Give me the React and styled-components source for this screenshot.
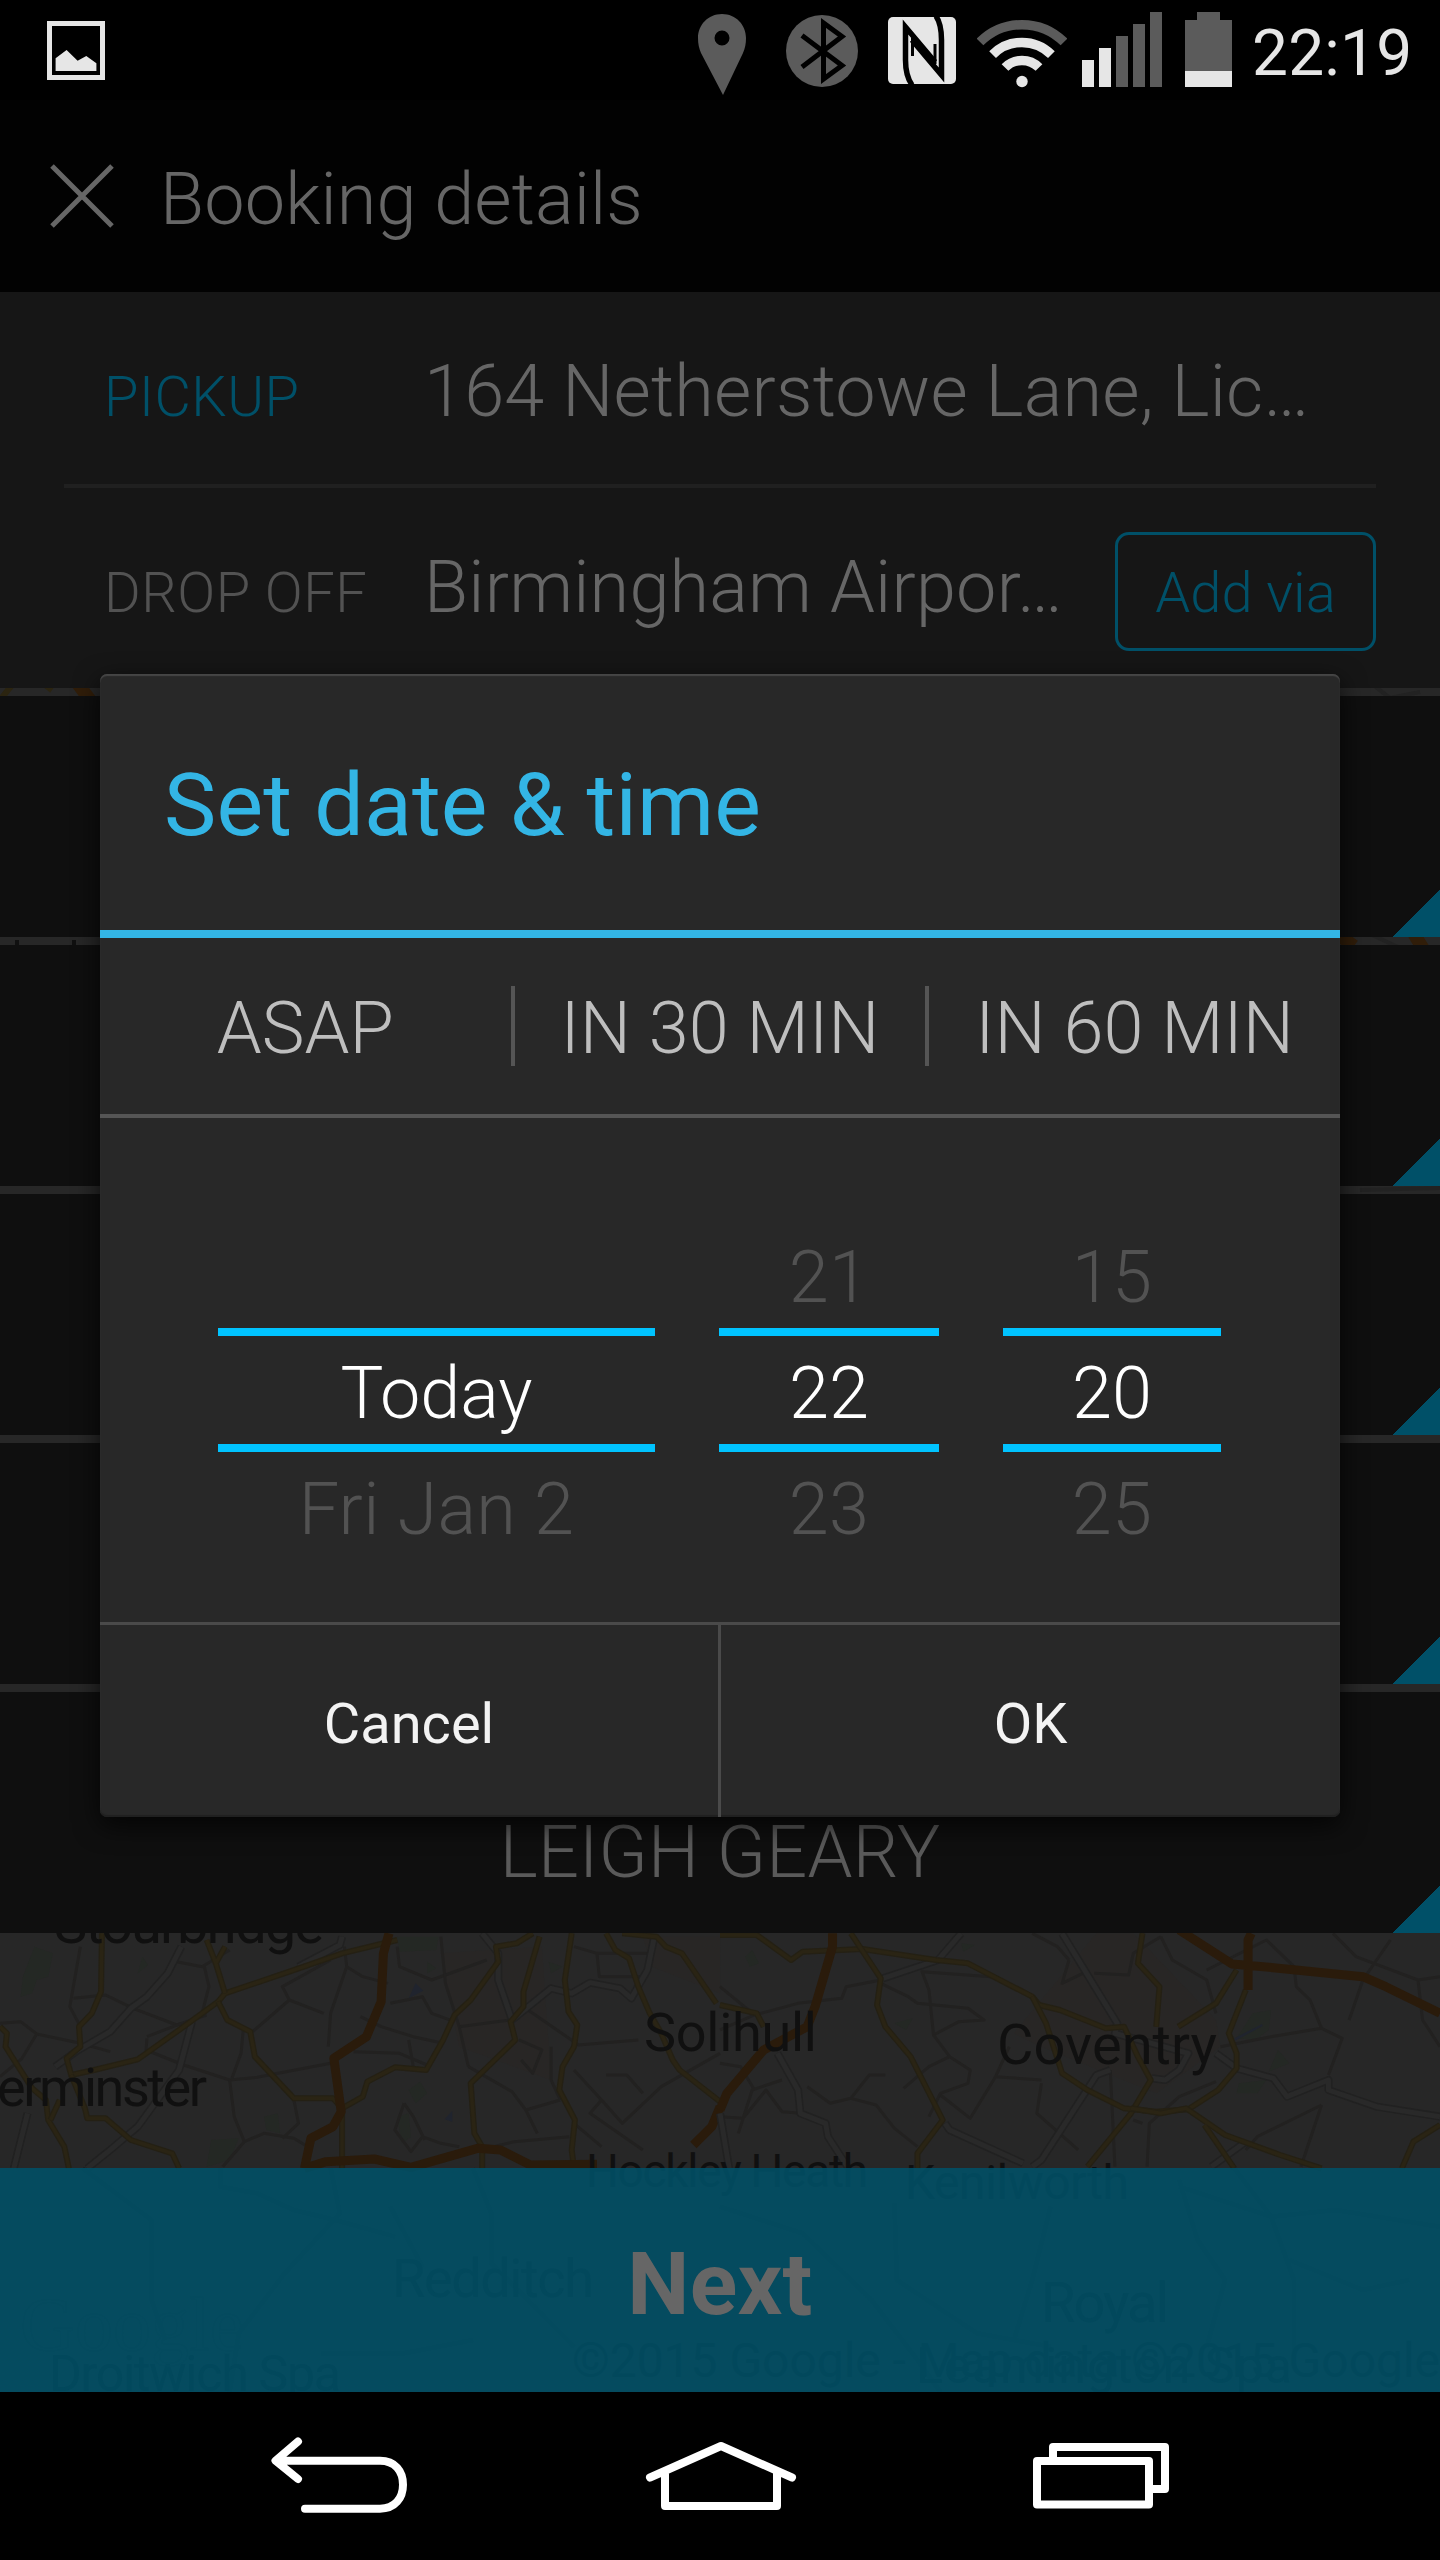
import React, { useState } from "react";
import styled, { createGlobalStyle } from "styled-components";

const bookingRows = ["", "", "", "", "LEIGH GEARY"];
const quickTimes = ["ASAP", "IN 30 MIN", "IN 60 MIN"];
const wheels = [
  { id: "day", width: 437, values: ["", "Today", "Fri Jan 2"] },
  { id: "hour", width: 220, values: ["21", "22", "23"] },
  { id: "minute", width: 218, values: ["15", "20", "25"] },
];

const StatusIcons = () => (
  <IconGroup>
    <Icon $w={48} $h={100} $gap={40} viewBox="698 0 48 100">
      <path
        fill="#5b5b5b"
        fillRule="evenodd"
        d="M722 14C708 14 698 25 698 38C698 44 699 48 701 53L723 95L743 53C745 48 746 44 746 38C746 25 736 14 722 14ZM722 30.500A7.500 7.500 0 1 1 722 45.500A7.500 7.500 0 1 1 722 30.500Z"
      />
    </Icon>
    <Icon $w={72} $h={100} $gap={29} viewBox="786 0 72 100">
      <circle cx="822" cy="51" r="36" fill="#5b5b5b" />
      <path
        d="M802 35.500L842 65.500L823.500 79V23L842 36.500L802 67"
        fill="none"
        stroke="#000"
        strokeWidth="5"
      />
    </Icon>
    <Icon $w={70} $h={100} $gap={20} viewBox="887 0 70 100">
      <rect x="888" y="17" width="68" height="67" rx="5" fill="#e6e6e6" />
      <g fill="none" stroke="#000" strokeWidth="5.500" strokeLinejoin="miter">
        <path d="M912 85C907 78 906 70 906 62V27L934.500 64V38" stroke="none" />
        <path d="M912 85C907 78 905.500 70 905.500 60V27L935 62" />
        <path d="M936 16C940 22 941.500 30 941.500 40V75L912 40" />
        <path d="M912.500 38V56M935 44V64" strokeWidth="3" />
      </g>
    </Icon>
    <Icon $w={90} $h={100} $gap={15} viewBox="977 0 90 100">
      <g fill="none" strokeWidth="9.500">
        <path d="M980 42A59.500 59.500 0 0 1 1064 42" stroke="#5b5b5b" />
        <path d="M992.600 54.600A41.500 41.500 0 0 1 1051.400 54.600" stroke="#e6e6e6" />
        <path d="M1005 67.500A24 24 0 0 1 1039 67.500" stroke="#e6e6e6" />
      </g>
      <circle cx="1022" cy="81.500" r="5.700" fill="#e6e6e6" />
    </Icon>
    <Icon $w={80} $h={100} $gap={23} viewBox="1082 0 80 100">
      {[60, 48, 36, 24, 12].map((top, i) => (
        <rect
          key={top}
          x={1082 + i * 17}
          y={top}
          width="12"
          height={87 - top}
          fill={i < 2 ? "#e6e6e6" : "#5b5b5b"}
        />
      ))}
    </Icon>
    <Icon $w={47} $h={100} $gap={20} viewBox="1185 0 47 100">
      <path d="M1185 20H1197V12H1220V20H1232V71H1185Z" fill="#5b5b5b" />
      <rect x="1185" y="71" width="47" height="16" fill="#e6e6e6" />
    </Icon>
  </IconGroup>
);

const minorRoads = [
  "M0 730L45 725L80 762L175 790L240 815M80 762L48 835L0 890M160 655L230 645L290 685L385 735L450 705M175 500L152 680L175 740",
  "M385 545L440 560L500 510M445 560L455 620L440 700L415 725M320 770L395 730M320 775L318 810L400 855L500 900L560 892L720 850",
  "M500 900L510 1010L532 1085L575 1060L640 1075L670 1100M532 1085L485 1160M640 960L650 1030L615 1075M530 745L525 820L505 895",
  "M750 500L755 560L720 700L715 800M755 560L790 590L845 610M550 755L630 660L705 700M630 660L615 620L720 540M865 500L870 560L940 600L1060 540",
  "M850 670L920 650L940 700L990 725M785 710L830 740L900 770L965 790M770 815L870 820L930 855M890 780L900 860M960 470L970 610L1000 740L1020 860",
  "M1000 740L1110 720M1130 780L1180 810L1160 880L1135 840M1150 690L1260 795L1390 780M1250 500L1300 520L1305 590L1400 590M1300 520L1420 520",
  "M1020 860L1115 935L1145 990L1170 1060M1145 990L1220 960M1200 800L1200 900L1220 960M1250 870L1310 960L1285 1000L1400 1110M1310 960L1355 1030L1440 920L1568 820",
  "M880 970L860 1050L895 1115L920 1070L960 1090L1000 1100M880 970L900 1010L925 1080M1320 885L1365 885L1400 940M1250 1030L1310 1100M1045 1110L1120 1085L1240 1070",
];

const minorRoadsEast = [
  "M0 620L75 705L170 670L265 655L275 620L350 600M75 705L0 750M350 610L410 650L430 670L540 685L575 720L520 725L465 765L455 630L440 575L590 590",
  "M465 765L500 830L455 860L400 925M500 830L545 870L540 910L480 940L455 1010M360 885L325 885L285 955L340 975L380 1045L430 1100M285 955L240 970L190 920",
  "M480 945L545 1015L600 890L700 900M600 890L630 800M760 540L745 610L790 580M680 460L735 500L760 540M815 580L890 585L900 520L960 470",
  "M960 470L985 540L1060 600L1080 700M850 870L860 1160M1090 800L1200 770L1310 745L1355 775L1325 885M1310 745L1285 660L1255 620L1250 560L1190 480L1060 570",
  "M1335 460L1385 530L1520 600L1568 590M1460 480L1400 600L1370 720M1520 600L1530 720L1568 800M920 1030L900 1020M930 1160L935 1030L1000 950L1080 905",
  "M1310 975L1170 1070L1145 1110M1310 975L1265 1160M0 1010L50 1015L100 930L135 995L175 1000M135 900L70 930L40 1060M700 910L690 1000L780 1110M0 850L45 860L75 930",
];

const yellowRoads = [
  "M222 460L220 635L200 700L172 740L175 800L145 835L155 885L205 870L300 838L385 755L475 665L490 640L630 575L745 520L865 480",
  "M450 480L470 550L490 500M470 550L490 640M475 665L495 720L545 755L555 830L640 955L725 955L745 985M0 740L15 760L12 800L70 925L100 960L105 1020L140 1100L150 1165",
  "M155 885L185 985L190 1015L230 1015L285 1080L375 1120L390 1165M130 960L110 1020M745 985L745 1165M745 985L790 950L800 905L860 862L928 870L965 780L990 705L1025 660L1085 545L1080 500L1125 490L1160 460",
  "M1175 470L1140 635L1140 680L1112 725L1122 780L1025 910L1033 1060L1050 1100V1165M1245 460L1230 600L1238 695L1257 735L1250 800L1225 860L1218 930L1252 1020L1245 1110L1250 1165",
  "M1320 460L1340 510L1370 535L1390 620L1415 700L1440 760L1465 840L1480 870L1568 965M1355 460L1430 470L1450 500L1485 520L1560 670",
];

const yellowRoadsEast = [
  "M0 465L80 465L155 540L180 515L310 507L470 540L540 550L680 650L695 675L740 690L840 745L880 740L910 830L938 900L895 1000L800 1160",
  "M285 460L350 595L342 675L360 740L415 830L485 1020L430 1120V1165M680 650L710 730L745 880L800 930L880 985L950 995L1020 988L1085 930L1125 865V820L1108 760L1145 630",
  "M920 460L910 550L957 620L950 740M1125 570L1080 670L998 740M895 985L960 1000L1015 985L1100 1065L1220 1125L1310 1165M1055 1035L1120 1165M1568 1035L1510 1085L1485 1165M0 675L80 700L95 740",
];

const whiteRoads = [
  "M395 500L365 580L320 650L285 685L240 755L165 815L120 860M418 725L390 870L300 1040L240 1110L190 1165M745 470L740 495L650 560M60 1000L30 1165M1050 460L1085 520V600L1115 720L1200 625L1245 640L1285 608L1350 625L1375 655L1410 570L1425 470",
];

const whiteRoadsEast = [
  "M525 460L475 540L355 595M745 460L865 730L860 760L1020 820L1000 870L970 900L940 895M850 870L820 885L700 1140L680 1160M1080 820L1125 865L1205 895L1235 950L1325 900L1325 930L1430 980L1568 1010M125 820L170 930L175 1000L230 1030L235 1070L280 1165M490 1030L500 1050L660 1150M1145 1085L1070 1160M0 1000L20 1165",
];

// The map is laid out on two 1568x1200 tiles that sit side by side.
const tiles = [
  {
    minor: minorRoads,
    white: whiteRoads,
    yellow: yellowRoads,
    motorway:
      "M847 460L835 520L830 665L798 770L727 835L743 995L725 1040L677 1075L663 1165M663 1165L710 1145L815 1137L895 1162L1040 1105L1090 1110L1155 1155L1300 1153M1568 980L1550 1040L1510 1095",
    south:
      "M180 1165L330 1320V1560L360 1680M480 1165V1220L560 1240L640 1290L730 1320L860 1370M720 1165L740 1300L620 1480L520 1660L500 1836M850 1280L920 1460M1030 1165L1070 1300V1450L1250 1700M700 1720L880 1720L1030 1680",
    woods:
      "M75 500L115 520L105 590L80 600L70 640L45 650L50 590ZM865 470L955 470L950 510L870 515ZM930 545L950 565L930 580ZM1195 545L1225 560L1200 580ZM460 1080L520 1075L500 1140L450 1160ZM575 1010L605 1000L610 1060L580 1050ZM865 1010L890 1000L895 1070L875 1090ZM890 930L915 905L930 940L905 970ZM310 530L322 555L300 580Z",
    water: "M890 655L905 610L922 632ZM968 1018L985 992L985 1025Z",
    town: "M960 520L1180 500L1200 900L1000 800ZM1400 470L1568 470V640L1420 560Z",
  },
  {
    minor: minorRoadsEast,
    white: whiteRoadsEast,
    yellow: yellowRoadsEast,
    motorway:
      "M245 460V500L207 680L190 740L95 810L15 940L0 990M1000 450L1115 552L1205 563L1400 590L1450 620L1568 700M1157 460L1150 480V630",
    south:
      "M0 1280L180 1360L330 1560L430 1740L480 1836M380 1270L385 1500L560 1660L720 1700M720 1280L680 1500L640 1680M1000 1200L1040 1380L1100 1500L1060 1700M1120 1165L1200 1310L1250 1500V1740M1000 1220L1200 1310L1340 1290L1568 1340M1240 1440L1400 1530L1500 1500",
    woods:
      "M1160 700L1200 690L1195 750L1165 780L1125 775ZM1215 810L1240 850L1195 875ZM1130 910L1190 900L1170 940L1125 940ZM55 530L70 510L85 550L65 560ZM380 730L420 715L405 750ZM525 490L555 495L530 515Z",
    water: "M1120 775L1180 732L1182 738L1122 782Z",
    town: "M820 460L900 460L1080 720L1090 800L950 940L700 800L640 760Z",
  },
];

const MapView = () => (
  <MapSvg viewBox="0 688 1440 1704" preserveAspectRatio="none">
    <rect x="0" y="688" width="1440" height="1704" fill="#272727" />
    <g fill="none" strokeWidth="13">
      <path d="M78 684L90 700M1340 936L1354 946M1414 934L1424 950" stroke="#301d09" />
      <path d="M12 685L0 700M44 684L52 690" stroke="#2b2410" strokeWidth="6" />
      <path
        d="M1372 684L1390 698L1420 692M1360 1190L1440 1188M1370 934L1400 948"
        stroke="#222"
        strokeWidth="4"
      />
      <path d="M17 940V946M74 940V946" stroke="#101010" strokeWidth="4" />
    </g>
    {tiles.map((tile, i) => (
      <g
        key={i}
        transform={`translate(${i * 720} 1780) scale(0.4592 0.33333)`}
        fill="none"
        strokeLinejoin="round"
      >
        <path d={tile.town} fill="#292724" opacity="0.6" />
        <path d={tile.woods} fill="#242824" />
        <path d={tile.water} fill="#20242e" />
        {tile.minor.map((d) => (
          <Road key={d} d={d} stroke="#222120" strokeWidth="3" />
        ))}
        {tile.white.map((d) => (
          <React.Fragment key={d}>
            <Road d={d} stroke="#212121" strokeWidth="8" />
            <Road d={d} stroke="#292929" strokeWidth="5" />
          </React.Fragment>
        ))}
        {tile.yellow.map((d) => (
          <React.Fragment key={d}>
            <Road d={d} stroke="#242014" strokeWidth="6" />
            <Road d={d} stroke="#2a2414" strokeWidth="3.500" />
          </React.Fragment>
        ))}
        <Road d={tile.motorway} stroke="#2a1b0b" strokeWidth="9" />
        <Road d={tile.south} stroke="#202020" strokeWidth="4" />
      </g>
    ))}
    <g fill="#101010" fontFamily="Roboto" fontWeight="400" fontSize="56">
      <text x="54" y="1943" textLength="270">Stourbridge</text>
      <text x="-3" y="2106" fontSize="54" textLength="210">erminster</text>
      <text x="644" y="2051" fontSize="54" textLength="173">Solihull</text>
      <text x="997" y="2064" textLength="220">Coventry</text>
      <text x="586" y="2187" fontSize="46" textLength="282">Hockley Heath</text>
      <text x="905" y="2199" fontSize="48" textLength="224">Kenilworth</text>
      <text x="392" y="2297" fontSize="54" textLength="202">Redditch</text>
      <text x="1041" y="2322" textLength="128">Royal</text>
      <text x="49" y="2391" fontSize="50" textLength="292">Droitwich Spa</text>
      <text x="916" y="2383" fontSize="50" textLength="376">Leamington Spa</text>
      <text x="572" y="2377" fontSize="48" textLength="868">
        ©2015 Google - Map data ©2015 Google
      </text>
      <text x="20" y="2350" fontFamily="Liberation Serif" fontSize="76" fill="none" stroke="#222">
        Google
      </text>
    </g>
  </MapSvg>
);

const App = () => {
  const [open, setOpen] = useState(true);

  return (
    <Screen>
      <GlobalStyle />
      <StatusBar>
        <Icon $w={58} $h={100} viewBox="47 0 58 100">
          <rect x="49.500" y="23.500" width="53" height="54" fill="none" stroke="#e6e6e6" strokeWidth="5" />
          <path
            d="M55.600 58.300L66.600 50L77.600 60.700L86.300 56L96.400 63.300V71H55.600Z"
            fill="#e6e6e6"
          />
        </Icon>
        <StatusIcons />
        <Clock>22:19</Clock>
      </StatusBar>

      <Body>
        <Page>
          <TitleBar>
            <Icon $w={66} $h={66} viewBox="0 0 66 66">
              <path d="M3 3L63 63M63 3L3 63" stroke="#666" strokeWidth="5" />
            </Icon>
            <PageTitle>Booking details</PageTitle>
          </TitleBar>
          <Route>
            <Stop>
              <StopLabel $active>PICKUP</StopLabel>
              <Address>164 Netherstowe Lane, Lic…</Address>
            </Stop>
            <Divider />
            <Stop>
              <StopLabel>DROP OFF</StopLabel>
              <Address>Birmingham Airpor…</Address>
              <ViaButton>Add via</ViaButton>
            </Stop>
          </Route>
          <Main>
            <MapView />
            <Content>
              <Rows>
                {bookingRows.map((text, i) => (
                  <BookingRow key={i}>{text}</BookingRow>
                ))}
              </Rows>
              <NextButton onClick={() => setOpen(true)}>Next</NextButton>
            </Content>
          </Main>
        </Page>

        {open && (
          <Overlay>
            <Dialog>
              <DialogTitle>Set date &amp; time</DialogTitle>
              <QuickTimes>
                {quickTimes.map((label) => (
                  <QuickTime key={label}>{label}</QuickTime>
                ))}
              </QuickTimes>
              <Picker>
                {wheels.map(({ id, width, values }) => (
                  <Wheel key={id} $width={width}>
                    <WheelValue $height={101}>{values[0]}</WheelValue>
                    <SelectedValue>{values[1]}</SelectedValue>
                    <WheelValue $height={115}>{values[2]}</WheelValue>
                  </Wheel>
                ))}
              </Picker>
              <Actions>
                <Action onClick={() => setOpen(false)}>Cancel</Action>
                <Action onClick={() => setOpen(false)}>OK</Action>
              </Actions>
            </Dialog>
          </Overlay>
        )}
      </Body>

      <NavBar>
        <NavIcon $w={144} $h={80} viewBox="268 2436 144 80">
          <path d="M298 2441.500L275.500 2460.700L298 2479M278 2460.700H380C395 2460.700 403 2471 403 2484.700C403 2498 395 2508.700 380 2508.700H305" />
        </NavIcon>
        <NavIcon $w={160} $h={80} viewBox="640 2436 160 80">
          <path d="M649 2477.500L720 2446L791 2477.500M664 2474V2506H776V2474" />
        </NavIcon>
        <NavIcon $w={144} $h={80} viewBox="1029 2436 144 80">
          <path d="M1037 2461H1149V2504.500H1037ZM1053 2458V2447H1165V2489H1152" />
        </NavIcon>
      </NavBar>
    </Screen>
  );
};

export default App;

const GlobalStyle = createGlobalStyle`
  body {
    margin: 0;
    background: #000;
  }
  * {
    box-sizing: border-box;
  }
  button {
    font: inherit;
    letter-spacing: inherit;
    color: inherit;
    background: none;
    border: 0;
    padding: 0;
  }
`;

const Screen = styled.div`
  width: 1440px;
  height: 2560px;
  display: flex;
  flex-direction: column;
  background: #000;
  font-family: Roboto, sans-serif;
  font-weight: 300;
  font-size: 72px;
  white-space: nowrap;
  overflow: hidden;
`;

const Icon = styled.svg`
  flex: none;
  display: block;
  width: ${(props) => props.$w}px;
  height: ${(props) => props.$h}px;
  margin-right: ${(props) => props.$gap || 0}px;
`;

const NavIcon = styled(Icon)`
  fill: none;
  stroke: #fff;
  stroke-width: 8;
  stroke-linecap: round;
  stroke-linejoin: round;
`;

const Road = styled.path`
  vector-effect: non-scaling-stroke;
`;

const StatusBar = styled.div`
  height: 100px;
  display: flex;
  align-items: center;
  padding: 0 28px 0 47px;
`;

const IconGroup = styled.div`
  display: flex;
  margin-left: auto;
`;

const Clock = styled.div`
  width: 160px;
  padding-top: 7px;
  font-size: 64px;
  font-weight: 400;
  line-height: 80px;
  letter-spacing: 0.2px;
  color: #e6e6e6;
`;

const Body = styled.div`
  height: 2292px;
  display: grid;

  > * {
    grid-area: 1 / 1;
  }
`;

const Page = styled.div`
  display: flex;
  flex-direction: column;
`;

const TitleBar = styled.div`
  height: 192px;
  display: flex;
  align-items: center;
  gap: 45px;
  padding-left: 49px;
  background: #020202;
`;

const PageTitle = styled.div`
  padding-top: 6px;
  letter-spacing: 0.1px;
  color: #666;
`;

const Route = styled.div`
  height: 396px;
  background: #161616;
`;

const Stop = styled.div`
  height: 192px;
  display: flex;
  align-items: baseline;
  padding: 0 64px 0 104px;
  line-height: 199px;
`;

const StopLabel = styled.div`
  width: 320px;
  font-size: 56px;
  letter-spacing: 0.5px;
  color: ${(props) => (props.$active ? "#005068" : "#525252")};
`;

const Address = styled.div`
  letter-spacing: 0.2px;
  color: #666;
`;

const Divider = styled.div`
  height: 4px;
  margin: 0 64px;
  background: #202020;
`;

const ViaButton = styled.button`
  align-self: flex-start;
  width: 261px;
  height: 119px;
  margin: 44px 0 0 auto;
  padding-top: 2px;
  border: 3px solid #005068;
  border-radius: 14px;
  font-size: 56px;
  line-height: 1;
  color: #005068;
`;

const Main = styled.div`
  flex: 1;
  display: grid;

  > * {
    grid-area: 1 / 1;
  }
`;

const MapSvg = styled.svg`
  display: block;
  width: 1440px;
  height: 1704px;
`;

const Content = styled.div`
  display: flex;
  flex-direction: column;
  justify-content: space-between;
  padding-top: 8px;
  z-index: 1;
`;

const Rows = styled.div`
  display: flex;
  flex-direction: column;
  gap: 8px;
`;

const BookingRow = styled.div`
  height: 241px;
  display: flex;
  align-items: flex-end;
  justify-content: center;
  padding-bottom: 38px;
  line-height: 84px;
  letter-spacing: 0.2px;
  color: #5a5a5a;
  background: linear-gradient(135deg, transparent 50%, #005068 50.5%) right bottom / 47px 48px
      no-repeat,
    #0f0f0f;
`;

const NextButton = styled.button`
  height: 224px;
  padding-top: 6px;
  background: rgba(0, 80, 103, 0.87);
  font-size: 88px;
  font-weight: 700;
  letter-spacing: 0.3px;
  color: #666;
`;

const Overlay = styled.div`
  display: flex;
  align-items: center;
  justify-content: center;
  padding-bottom: 1px;
  z-index: 2;
`;

const Dialog = styled.div`
  width: 1240px;
  height: 1143px;
  display: flex;
  flex-direction: column;
  background: #282828;
  border-radius: 7px;
  box-shadow:
    inset 0 2px 1px #454545,
    inset 0 -2px 1px #202020,
    0 8px 26px rgba(0, 0, 0, 0.75);
`;

const DialogTitle = styled.div`
  height: 264px;
  padding: 7px 64px 0;
  border-bottom: 8px solid #33b5e5;
  font-size: 88px;
  font-weight: 400;
  line-height: 248px;
  letter-spacing: 0.15px;
  color: #33b5e5;
`;

const QuickTimes = styled.div`
  height: 180px;
  display: flex;
  align-items: center;
  border-bottom: 4px solid #555;
`;

const QuickTime = styled.button`
  flex: 1;
  height: 80px;
  padding-top: 6px;
  line-height: 74px;
  letter-spacing: 0.1px;
  color: #bebebe;

  & + & {
    border-left: 4px solid #555;
  }
`;

const Picker = styled.div`
  height: 504px;
  display: flex;
  gap: 64px;
  padding: 109px 0 0 118px;
`;

const Wheel = styled.div`
  width: ${(props) => props.$width}px;
  text-align: center;
`;

const WheelValue = styled.div`
  height: ${(props) => props.$height}px;
  line-height: ${(props) => props.$height}px;
  letter-spacing: 0.3px;
  color: #525252;
`;

const SelectedValue = styled.div`
  height: 124px;
  padding-top: 7px;
  border: solid #00c3ff;
  border-width: 8px 0;
  line-height: 101px;
  color: #fff;
`;

const Actions = styled.div`
  flex: 1;
  display: flex;
  border-top: 3px solid #4a4a4a;
`;

const Action = styled.button`
  width: 618px;
  padding-top: 5px;
  font-size: 56px;
  font-weight: 400;
  color: #f3f3f3;

  & + & {
    width: 622px;
    border-left: 3px solid #4a4a4a;
  }
`;

const NavBar = styled.div`
  height: 168px;
  display: flex;
  align-items: center;
  justify-content: space-between;
  padding: 0 267px 0 268px;
`;
